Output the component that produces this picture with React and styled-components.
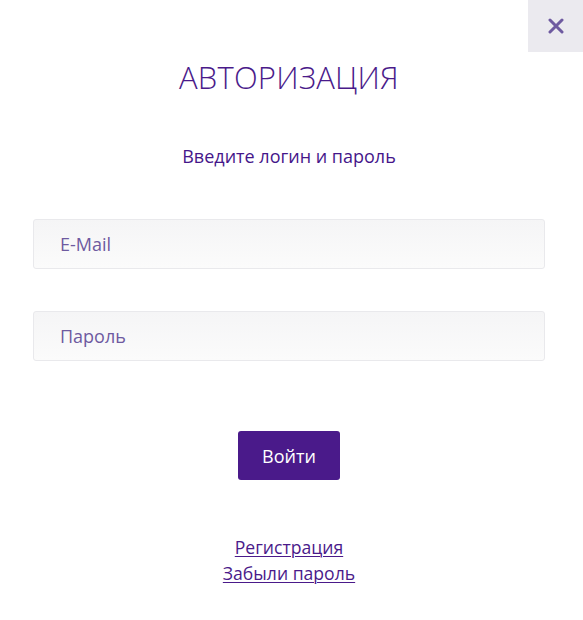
import React, { useState } from "react";
import styled, { createGlobalStyle } from "styled-components";

const GlobalStyle = createGlobalStyle`
  html, body {
    margin: 0;
    padding: 0;
    background: #ffffff;
    font-family: "Open Sans", "Liberation Sans", sans-serif;
  }
  * { box-sizing: border-box; }
`;

const Modal = styled.div`
  position: relative;
  width: 583px;
  min-height: 620px;
  background: #ffffff;
  padding: 57px 38px 0 33px;
  display: flex;
  flex-direction: column;
  align-items: center;
`;

const CloseButton = styled.button`
  position: absolute;
  top: 0;
  right: 0;
  width: 55px;
  height: 52px;
  border: none;
  background: #ebeaef;
  display: flex;
  align-items: center;
  justify-content: center;
  cursor: pointer;
  padding: 0;
`;

const Title = styled.h1`
  margin: 0;
  font-size: 31px;
  font-weight: 300;
  line-height: 41px;
  color: #4a1a8a;
  letter-spacing: 0.2px;
`;

const Subtitle = styled.p`
  margin: 46px 0 0;
  font-size: 18px;
  font-weight: 500;
  line-height: 24px;
  color: #45168a;
`;

const Form = styled.form`
  width: 100%;
  display: flex;
  flex-direction: column;
  align-items: center;
  margin-top: 51px;
`;

const Field = styled.input`
  width: 100%;
  height: 50px;
  border: 1px solid #e9e9ec;
  border-radius: 3px;
  background: linear-gradient(#f5f5f6, #fbfbfb);
  padding: 0 26px;
  font-family: inherit;
  font-size: 18px;
  color: #4a1a8a;
  outline: none;
  margin-bottom: ${(p) => p.$gap || 0}px;

  &::placeholder {
    color: #6e5aa0;
  }
`;

const Submit = styled.button`
  margin-top: 70px;
  width: 102px;
  height: 49px;
  border: none;
  border-radius: 3px;
  background: #4a1a8a;
  color: #ffffff;
  font-family: inherit;
  font-size: 18px;
  font-weight: 500;
  cursor: pointer;
`;

const Links = styled.div`
  margin-top: 54px;
  display: flex;
  flex-direction: column;
  align-items: center;
`;

const TextLink = styled.a`
  font-size: 17.6px;
  line-height: 26px;
  color: #4a1a8a;
  text-decoration: underline;
  text-underline-offset: 2px;
  text-decoration-thickness: 1px;
  cursor: pointer;
`;

const App = () => {
  const [email, setEmail] = useState("");
  const [password, setPassword] = useState("");

  return (
    <>
      <GlobalStyle />
      <Modal>
        <CloseButton aria-label="Закрыть">
          <svg width="16" height="16" viewBox="0 0 16 16">
            <path
              d="M2 2 L14 14 M14 2 L2 14"
              stroke="#6e5aa0"
              strokeWidth="3"
              strokeLinecap="round"
            />
          </svg>
        </CloseButton>

        <Title>АВТОРИЗАЦИЯ</Title>
        <Subtitle>Введите логин и пароль</Subtitle>

        <Form onSubmit={(e) => e.preventDefault()}>
          <Field
            $gap={42}
            type="email"
            placeholder="E-Mail"
            value={email}
            onChange={(e) => setEmail(e.target.value)}
          />
          <Field
            type="password"
            placeholder="Пароль"
            value={password}
            onChange={(e) => setPassword(e.target.value)}
          />
          <Submit type="submit">Войти</Submit>
        </Form>

        <Links>
          <TextLink>Регистрация</TextLink>
          <TextLink>Забыли пароль</TextLink>
        </Links>
      </Modal>
    </>
  );
};

export default App;
